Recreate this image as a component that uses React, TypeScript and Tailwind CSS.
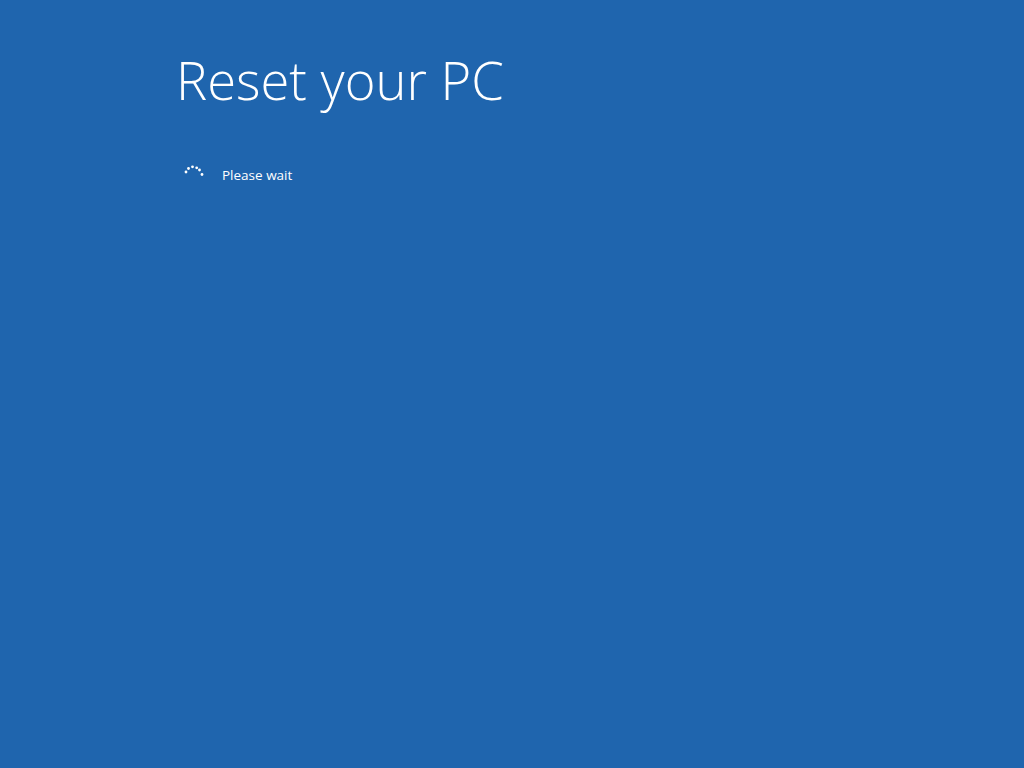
export default function App() {
  const dots = [
    [186, 170],
    [188.5, 166.5],
    [192.5, 164.8],
    [196.7, 165.8],
    [199.5, 168],
    [202, 172.5],
  ];
  return (
    <div className="min-h-[768px] w-full bg-[#1f65ae] text-white" style={{ fontFamily: '"Open Sans", "Noto Sans", sans-serif' }}>
      <div className="pl-[176px] pt-[48px]">
        <h1 className="text-[52.5px] font-light leading-[64px]">Reset your PC</h1>
        <div className="mt-[53px] flex items-center gap-[16px]">
          <svg width="30" height="20" viewBox="176 163 30 20" aria-hidden>
            {dots.map(([x, y], i) => (
              <circle key={i} cx={x} cy={y} r="1.4" fill="white" />
            ))}
          </svg>
          <span className="text-[13.5px] leading-[20px]">Please wait</span>
        </div>
      </div>
    </div>
  );
}
